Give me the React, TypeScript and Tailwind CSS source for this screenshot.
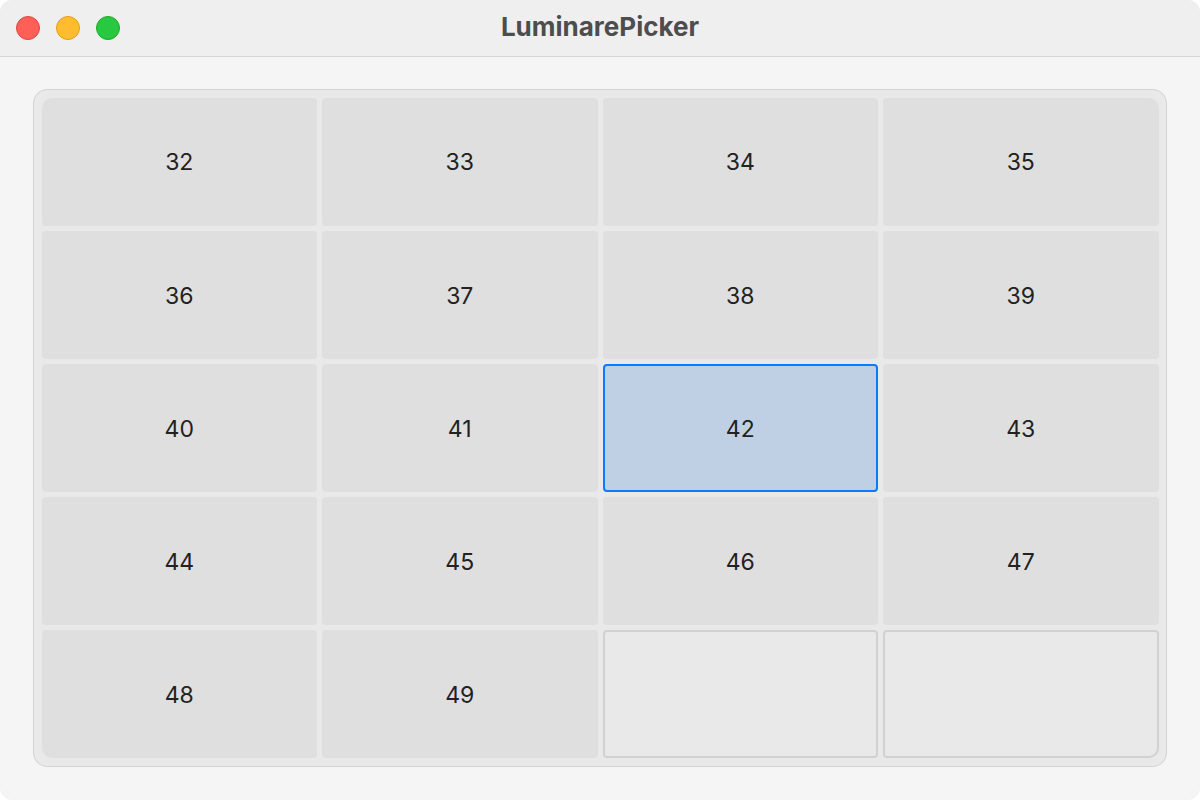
import React from 'react';

const numbers = [32, 33, 34, 35, 36, 37, 38, 39, 40, 41, 42, 43, 44, 45, 46, 47, 48, 49];

function cornerClass(i: number) {
  if (i === 0) return 'rounded-[4px] rounded-tl-[10px]';
  if (i === 3) return 'rounded-[4px] rounded-tr-[10px]';
  if (i === 16) return 'rounded-[4px] rounded-bl-[10px]';
  if (i === 19) return 'rounded-[4px] rounded-br-[10px]';
  return 'rounded-[4px]';
}

export default function App() {
  const cells = Array.from({ length: 20 }, (_, i) => (i < numbers.length ? numbers[i] : null));

  return (
    <div className="w-[1200px] h-[800px] bg-white font-['Inter','Liberation_Sans',sans-serif]">
      <div className="w-full h-full rounded-[12px] overflow-hidden bg-[#f5f5f5] flex flex-col">
        {/* title bar */}
        <div className="relative h-[57px] shrink-0 bg-[#efefef] border-b border-[#d6d6d6] flex items-center justify-center">
          <div className="absolute left-[16px] top-[16px] flex gap-[16px]">
            <span className="w-[24px] h-[24px] rounded-full bg-[#ff5f57] border border-[#e2463f]" />
            <span className="w-[24px] h-[24px] rounded-full bg-[#febc2e] border border-[#e1a116]" />
            <span className="w-[24px] h-[24px] rounded-full bg-[#28c840] border border-[#1aab29]" />
          </div>
          <span className="text-[26px] leading-none font-bold text-[#4d4d4d] mt-[-2px]">LuminarePicker</span>
        </div>

        {/* body */}
        <div className="flex-1 pt-[32px] px-[33px] pb-[33px]">
          <div className="h-full border-[1.5px] border-[#d3d3d3] bg-[#e9e9e9] rounded-[14px] p-[7.5px] grid grid-cols-4 grid-rows-5 gap-[5px]">
            {cells.map((n, i) => {
              if (n === null) {
                return (
                  <div
                    key={i}
                    className={`${cornerClass(i)} border-2 border-[#d1d1d1] bg-[#e9e9e9]`}
                  />
                );
              }
              const selected = n === 42;
              return (
                <div
                  key={i}
                  className={`${cornerClass(i)} flex items-center justify-center pt-[2px] text-[23px] text-[#222] ${
                    selected ? 'bg-[#bfd0e4] border-2 border-[#0a7aff]' : 'bg-[#dfdfdf]'
                  }`}
                >
                  {n}
                </div>
              );
            })}
          </div>
        </div>
      </div>
    </div>
  );
}
